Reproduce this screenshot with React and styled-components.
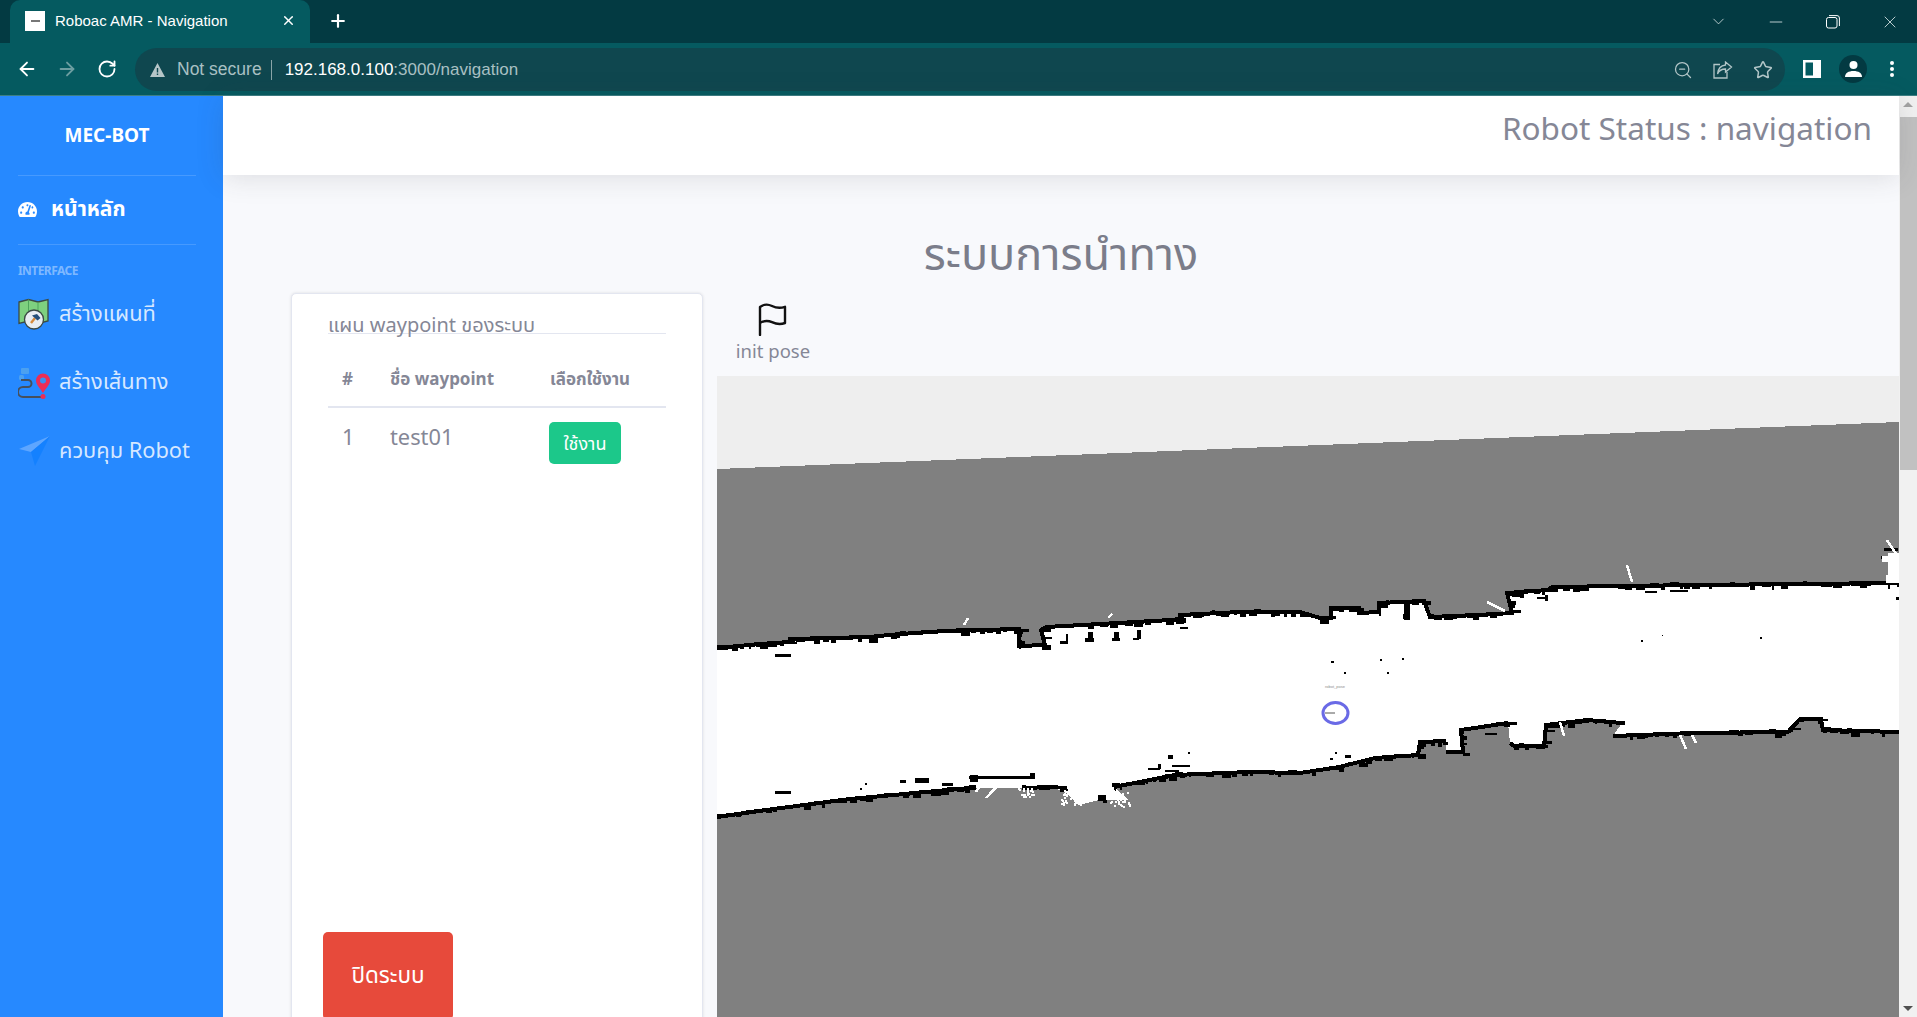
import React from "react";
import styled, { createGlobalStyle } from "styled-components";
import { FaTachometerAlt } from "react-icons/fa";
import { ArrowLeft, ArrowRight, RotateCw, ZoomOut, Star, ChevronDown, Minus, X, Plus } from "lucide-react";

const Global = createGlobalStyle`
  html, body { margin: 0; padding: 0; height: 100%; overflow: hidden; background: #f8f9fc; }
  #root { height: 1017px; }
  * { box-sizing: border-box; }
`;

const FONT = `"Noto Sans", "Noto Sans Thai", "Open Sans", "Liberation Sans", sans-serif`;
const UI = `"Liberation Sans", "Roboto", sans-serif`;

const Frame = styled.div`
  width: 1917px; height: 1017px; display: flex; flex-direction: column; overflow: hidden;
  font-family: ${FONT}; color: #858796;
`;
const TabStrip = styled.div`
  height: 43px; flex: none; background: #033a42; display: flex; align-items: flex-end; padding-left: 10px; color: #fff;
`;
const Tab = styled.div`
  width: 300px; height: 43px; background: #055a60; border-radius: 10px 10px 0 0; display: flex; align-items: center;
  padding: 0 14px 2px 15px; font: 15px ${UI};
`;
const Favicon = styled.div`
  width: 20px; height: 20px; background: #fff; margin-right: 10px; display: flex; align-items: center; justify-content: center;
  &::after { content: ""; width: 9px; height: 2px; background: #777; }
`;
const TabTitle = styled.span` flex: 1; `;
const NewTab = styled.div` margin: 0 0 12px 18px; display: flex; height: 20px; `;
const WindowControls = styled.div`
  margin-left: auto; margin-right: -1px; height: 43px; display: flex; align-items: center; color: #dfe8e9;
`;
const WindowButton = styled.div` width: 57px; display: flex; justify-content: center; `;
const RestoreIcon = () => (
  <svg width="14" height="14" viewBox="0 0 14 14" fill="none" stroke="#fff" strokeWidth="1">
    <rect x="0.5" y="2.5" width="10.5" height="10.5" rx="2" />
    <path d="M3 .6h8a2.4 2.4 0 0 1 2.4 2.4v8" />
  </svg>
);
const Toolbar = styled.div`
  height: 53px; flex: none; background: #055a60; display: flex; align-items: center; padding-left: 16px; color: #fff;
  border-bottom: 1px solid #3c7f84;
`;
const NavBtn = styled.div`
  width: 40px; display: flex; color: ${p => (p.$dim ? "#6d9ea1" : "#fff")};
  padding-left: ${p => p.$nudge || 0}px;
`;
const Omnibox = styled.div`
  margin-left: -1px; width: 1650px; height: 43px; background: #0f474f; border-radius: 22px; display: flex; align-items: center;
  padding: 1px 0 0 15px; font: 17px ${UI}; color: #a9c0c3;
`;
const NotSecure = styled.span` margin-left: 12px; font-size: 17.5px; `;
const Divider = styled.span` width: 1px; height: 20px; background: #8aa5a8; margin: 0 13px 0 9px; `;
const Host = styled.span` color: #fff; `;
const OmniIcons = styled.div` margin-left: auto; display: flex; align-items: center; gap: 20px; padding-right: 12px; color: #b3c6c8; `;
const ToolRight = styled.div` display: flex; align-items: center; margin-left: 18px; gap: 18px; `;
const Avatar = styled.div`
  width: 28px; height: 28px; border-radius: 50%; background: #033a42; display: flex; align-items: center; justify-content: center;
`;
const DotsWrap = styled.div` display: flex; margin-left: 4px; `;
const Body = styled.div` flex: 1; display: flex; min-height: 0; `;

const Sidebar = styled.aside`
  width: 223px; flex: none; background: #2689ff; color: #fff; padding: 0 27px 0 18px; display: flex; flex-direction: column;
`;
const Brand = styled.div`
  height: 79px; display: flex; align-items: center; justify-content: center; font-size: 19px; font-weight: 700; padding-bottom: 2px;
`;
const Rule = styled.div` height: 1px; background: rgba(255,255,255,.15); `;
const HomeLink = styled.div`
  height: 68px; display: flex; align-items: center; font-size: 21px; font-weight: 700; gap: 14px; padding-bottom: 2px;
`;
const SectionLabel = styled.div`
  margin-top: 18px; font-size: 12px; font-weight: 700; letter-spacing: -.55px; color: rgba(255,255,255,.42); line-height: 16px;
`;
const NavList = styled.div` display: flex; flex-direction: column; margin-top: 1px; `;
const NavItem = styled.div`
  height: 68.5px; display: flex; align-items: center; gap: 9px; font-size: 21.8px; color: rgba(255,255,255,.82); white-space: nowrap;
`;

const Main = styled.main` flex: 1; display: flex; flex-direction: column; min-width: 0; `;
const Topbar = styled.header`
  height: 79px; flex: none; background: #fff; box-shadow: 0 .15rem 1.75rem 0 rgba(58,59,69,.15); display: flex; justify-content: flex-end;
  align-items: center; padding: 0 27px 17px 0; font-size: 31.5px; position: relative; z-index: 1;
`;
const Heading = styled.h1`
  margin: 0; height: 118px; flex: none; display: flex; align-items: center; justify-content: center; font-size: 45px; font-weight: 400; color: #7b7d8a; padding-top: 44px;
`;
const Columns = styled.div` flex: 1; display: flex; min-height: 0; padding-left: 68px; `;
const Card = styled.section`
  width: 412px; flex: none; margin-right: 14px; background: #fff; border: 1px solid #e3e6f0; border-radius: 5px; height: 760px; padding: 20px 36px 0;
  box-shadow: 0 0 3px rgba(58,59,69,.15); display: flex; flex-direction: column;
`;
const CardTitle = styled.div`
  height: 20px; font-size: 20px; line-height: 22px; border-bottom: 1px solid #e3e6f0; white-space: nowrap; color: #858796;
`;
const Table = styled.div` display: grid; grid-template-columns: 62px 160px 1fr; `;
const HeadCell = styled.div`
  height: 74px; padding-top: 31px; line-height: 28px; font-size: 17px; font-weight: 700; border-bottom: 2px solid #e3e6f0; padding-left: ${p => p.$pad || 0}px; white-space: nowrap;
`;
const Cell = styled.div`
  height: 60px; padding-top: 12px; line-height: 34px; font-size: 21.8px; padding-left: ${p => p.$pad || 0}px;
`;
const UseButton = styled.div`
  margin-top: 2px; margin-left: -1px; width: 72px; height: 42px; background: #1cc88a; color: #fff; border-radius: 5px; font-size: 18px;
  display: flex; align-items: center; justify-content: center;
`;
const ShutButton = styled.div`
  margin: 464px 0 0 -5px; width: 130px; height: 88px; background: #e74a3b; border-radius: 5px; color: #fff; font-size: 22.5px; flex: none;
  display: flex; align-items: center; justify-content: center;
`;
const MapColumn = styled.div` flex: 1; display: flex; flex-direction: column; min-width: 0; padding-top: 8px; `;
const PoseTool = styled.div`
  width: 112px; height: 75px; flex: none; display: flex; flex-direction: column; align-items: center; font-size: 18.5px; line-height: 30px; padding-top: 1px;
`;
const MapSvg = styled.svg` display: block; flex: none; background: #808080; `;
const RobotLabel = styled.text` font: 4px ${UI}; fill: #8e8e8e; `;
const Scrollbar = styled.div`
  width: 18px; flex: none; background: #f1f1f1; display: flex; flex-direction: column; align-items: center;
`;
const ScrollArrow = styled.div`
  height: 17px; flex: none; width: 100%; display: flex; align-items: center; justify-content: center;
  &::after { content: ""; border-left: 5px solid transparent; border-right: 5px solid transparent;
    ${p => (p.$down ? "border-top: 5px solid #505050;" : "border-bottom: 5px solid #a3a3a3;")} }
`;
const Thumb = styled.div` width: 100%; height: 353px; background: #c1c1c1; margin-top: 4px; margin-left: 2px; `;
const Spacer = styled.div` flex: 1; `;

/* ---------- map data (coordinates = page pixels) ---------- */
const topWall = [[717,648],[760,644],[789,642],[790,639],[869,637],[900,634],[946,631],[1019,629],[1019,646],[1045,645],[1041,630],[1046,627],[1100,624],[1171,620],[1180,619],[1180,615],[1240,612],[1300,612],[1320,618],[1331,618],[1331,608],[1359,608],[1359,613],[1379,612],[1379,603],[1424,601],[1430,617],[1477,615],[1512,613],[1507,593],[1548,590],[1552,587],[1700,585],[1899,583]];
const bottomWall = [[717,817],[766,810],[850,799],[915,793],[970,788],[1022,788],[1053,787],[1066,793],[1079,805],[1099,800],[1129,800],[1114,787],[1175,775],[1250,772],[1300,773],[1339,767],[1375,758],[1418,755],[1420,742],[1446,741],[1446,752],[1463,752],[1461,730],[1508,723],[1510,743],[1514,746],[1544,746],[1546,725],[1587,720],[1622,723],[1613,736],[1693,733],[1788,732],[1800,719],[1821,719],[1823,730],[1899,732]];
const toPts = a => a.map(p => p.join(",")).join(" ");
const freePoly = toPts([...topWall, ...[...bottomWall].reverse()]);
const bottomLines = [
  [[717,817],[766,810],[850,799],[915,793],[970,788]],
  [[1022,788],[1053,787]],
  [[1114,787],[1175,775],[1250,772],[1300,773],[1339,767],[1375,758],[1418,755],[1420,742],[1446,741]],
  [[1446,752],[1463,752],[1461,730],[1508,723]],
  [[1510,743],[1514,746],[1544,746],[1546,725],[1587,720],[1622,723]],
  [[1613,736],[1693,733],[1788,732],[1800,719],[1821,719],[1823,730],[1899,732]],
];

let seed = 7;
const rnd = () => ((seed = (seed * 16807) % 2147483647) / 2147483647);
const jitter = line => {
  const out = [];
  for (let i = 0; i < line.length - 1; i++) {
    const [x1, y1] = line[i]; const [x2, y2] = line[i + 1];
    const len = Math.hypot(x2 - x1, y2 - y1);
    for (let d = 0; d < len; d += 4 + rnd() * 7) {
      const t = d / len;
      out.push([Math.round(x1 + (x2 - x1) * t), Math.round(y1 + (y2 - y1) * t + rnd() * 4 - 3), Math.round(2 + rnd() * 8), Math.round(2 + rnd() * 3)]);
    }
  }
  return out;
};
const blackBits = [topWall, ...bottomLines].flatMap(jitter);
const blobs = [
  [775,654,16,3],[775,791,16,3],[915,778,14,5],[900,780,6,3],[942,783,11,3],[947,787,8,2],[865,783,2,2],[860,788,2,2],
  [969,776,66,3],[970,775,8,7],[1030,773,5,3],[1053,786,14,3],[1060,789,8,3],[1098,795,8,6],[1103,800,4,3],[1112,783,8,4],
  [1066,634,2,9],[1060,641,8,3],[1088,632,5,8],[1085,638,9,4],[1114,632,5,7],[1112,638,8,3],[1137,630,4,9],[1133,638,6,2],
  [1018,640,4,6],[1180,627,8,2],[1404,602,6,18],[1403,614,3,5],
  [1168,755,5,4],[1188,752,2,2],[1148,768,12,2],[1158,764,3,5],[1165,770,14,2],[1172,765,18,2],[1175,772,8,3],[1176,774,6,3],
  [1331,661,3,2],[1380,659,2,2],[1344,672,2,2],[1387,672,2,2],[1402,658,2,2],[1641,640,2,2],[1662,635,1,1],[1760,637,2,2],
  [1884,548,14,3],[1881,556,3,3],[1892,572,5,3],[1896,597,3,3],[1537,597,9,2],[1545,595,3,6],[1670,590,18,2],[1645,591,12,2],
  [1345,755,6,3],[1335,752,2,2],[1330,758,3,2],[1300,771,4,1],[1485,733,12,2]
];
const whiteBits = [[1888,553,12,30],[1882,556,8,6],[1886,575,10,8]];
const whiteLines = [
  [[1887,540],[1898,557]],[[1627,565],[1632,582]],[[1560,722],[1564,736]],[[1680,735],[1686,749]],[[1692,735],[1696,743]],
  [[1487,602],[1505,611]],[[1003,780],[986,798]],[[984,780],[976,792]],[[964,625],[968,618]],[[1108,618],[1112,614]]
];
const scatter = [];
for (let i = 0; i < 80; i++) {
  const left = i % 2 === 0;
  scatter.push([Math.round((left ? 1060 : 1110) + rnd() * 20), Math.round(790 + rnd() * 16)]);
}
for (let i = 0; i < 24; i++) {
  scatter.push([Math.round(1016 + rnd() * 18), Math.round(786 + rnd() * 10)]);
}

const Flag = () => (
  <svg width="32" height="34" viewBox="0 0 32 34" fill="none" stroke="#111" strokeWidth="2.4" strokeLinejoin="round" strokeLinecap="round">
    <path d="M3 33V5c4-3 8-3 12-1s8 2.6 13 .8V21c-5 1.8-9 1-13-.8s-8-1.6-12 .8" />
  </svg>
);
const MapIcon = () => (
  <svg width="32" height="32" viewBox="0 0 32 32">
    <path d="M1 4l9.500-2.500L20 4l10-2.500V23l-10 2.500L10.500 23 1 25.500z" fill="#7ed07f" stroke="#3c4a44" strokeWidth="1.300" />
    <path d="M10.500 1.500V23M20 4v21" stroke="#4ea55c" strokeWidth="1" />
    <circle cx="16" cy="21.500" r="9.500" fill="#e9eef2" stroke="#3c4a44" strokeWidth="1.300" />
    <path d="M13 25l4-5" stroke="#d68b3c" strokeWidth="2.400" />
    <path d="M14 17.500l5-1.500 3.500 4-3 2.500z" fill="#26507a" />
  </svg>
);
const RouteIcon = () => (
  <svg width="32" height="32" viewBox="0 0 32 32" fill="none">
    <rect x="3" y="1" width="8" height="6" rx="1" fill="#4ba0f0" />
    <rect x="1" y="8" width="5" height="5" rx="1.500" fill="#4ba0f0" />
    <path d="M3 13h7a3.500 3.500 0 0 1 0 7H5a4 4 0 0 0 0 10h20" stroke="#46505c" strokeWidth="2" />
    <path d="M25 26c-3-5-7-8-7-12.500a7 7 0 0 1 14 0C32 18 28 21 25 26z" fill="#ec2d55" />
    <circle cx="25" cy="13.500" r="3" fill="#3b8ff0" />
    <circle cx="25" cy="29.500" r="2.500" fill="#ec2d55" />
  </svg>
);
const PlaneIcon = () => (
  <svg width="32" height="32" viewBox="0 0 32 32">
    <path d="M32 1L1 14l12 3z" fill="#5ea6ff" />
    <path d="M32 1L13 17l4 14z" fill="#1481ff" />
  </svg>
);
const AlertIcon = () => (
  <svg width="15" height="14" viewBox="0 0 15 14">
    <path fillRule="evenodd" d="M7.500 0L15 14H0zM6.800 5v4.500h1.400V5zM6.800 10.500V12h1.400v-1.500z" fill="#b5c5c7" />
  </svg>
);
const ShareIcon = () => (
  <svg width="20" height="18" viewBox="0 0 20 18" fill="none" stroke="#b3c6c8" strokeWidth="1.300">
    <path d="M7 3.500H1v13.500h13v-6" />
    <path d="M12.500 1l6 5-6 5V8C8.500 8 6 9.500 4.500 13 5 8 8 4.500 12.500 4z" />
  </svg>
);
const PanelIcon = () => (
  <svg width="18" height="18" viewBox="0 0 18 18">
    <path fillRule="evenodd" d="M0 0h18v18H0zM2.500 2.500v13H10v-13z" fill="#fff" />
  </svg>
);
const PersonIcon = () => (
  <svg width="17" height="16" viewBox="0 0 17 16" fill="#fff">
    <circle cx="8.500" cy="4" r="4" /><path d="M0 16c0-4 3.500-6 8.500-6s8.500 2 8.500 6z" />
  </svg>
);
const Dots = () => (
  <svg width="6" height="18" viewBox="0 0 6 18" fill="#fff"><circle cx="3" cy="3" r="2" /><circle cx="3" cy="9" r="2" /><circle cx="3" cy="15" r="2" /></svg>
);

export default function App() {
  return (
    <Frame>
      <Global />
      <TabStrip>
        <Tab>
          <Favicon />
          <TabTitle>Roboac AMR - Navigation</TabTitle>
          <X size={15} strokeWidth={2.4} />
        </Tab>
        <NewTab><Plus size={20} strokeWidth={2.6} /></NewTab>
        <WindowControls>
          <WindowButton><ChevronDown size={19} strokeWidth={1} /></WindowButton>
          <WindowButton><Minus size={20} strokeWidth={1} /></WindowButton>
          <WindowButton><RestoreIcon /></WindowButton>
          <WindowButton><X size={20} strokeWidth={1} /></WindowButton>
        </WindowControls>
      </TabStrip>
      <Toolbar>
        <NavBtn><ArrowLeft size={22} strokeWidth={2} /></NavBtn>
        <NavBtn $dim><ArrowRight size={22} strokeWidth={2} /></NavBtn>
        <NavBtn $nudge={1}><RotateCw size={20} strokeWidth={2.2} /></NavBtn>
        <Omnibox>
          <AlertIcon />
          <NotSecure>Not secure</NotSecure>
          <Divider />
          <Host>192.168.0.100</Host>:3000/navigation
          <OmniIcons>
            <ZoomOut size={20} strokeWidth={1.5} />
            <ShareIcon />
            <Star size={20} strokeWidth={1.8} />
          </OmniIcons>
        </Omnibox>
        <ToolRight>
          <PanelIcon />
          <Avatar><PersonIcon /></Avatar>
          <DotsWrap><Dots /></DotsWrap>
        </ToolRight>
      </Toolbar>
      <Body>
        <Sidebar>
          <Brand>MEC-BOT</Brand>
          <Rule />
          <HomeLink><FaTachometerAlt size={19} />หน้าหลัก</HomeLink>
          <Rule />
          <SectionLabel>INTERFACE</SectionLabel>
          <NavList>
            <NavItem><MapIcon />สร้างแผนที่</NavItem>
            <NavItem><RouteIcon />สร้างเส้นทาง</NavItem>
            <NavItem><PlaneIcon />ควบคุม Robot</NavItem>
          </NavList>
        </Sidebar>
        <Main>
          <Topbar>Robot Status : navigation</Topbar>
          <Heading>ระบบการนำทาง</Heading>
          <Columns>
            <Card>
              <CardTitle>แผน waypoint ของระบบ</CardTitle>
              <Table>
                <HeadCell $pad={14}>#</HeadCell>
                <HeadCell>ชื่อ waypoint</HeadCell>
                <HeadCell>เลือกใช้งาน</HeadCell>
                <Cell $pad={14}>1</Cell>
                <Cell>test01</Cell>
                <Cell><UseButton>ใช้งาน</UseButton></Cell>
              </Table>
              <ShutButton>ปิดระบบ</ShutButton>
            </Card>
            <MapColumn>
              <PoseTool><Flag />init pose</PoseTool>
              <MapSvg width="1182" height="641" viewBox="717 376 1182 641" shapeRendering="crispEdges">
                <polygon points="717,376 1899,376 1899,422 717,469" fill="#eeeeee" />
                <polygon points={freePoly} fill="#fff" />
                <polyline points={toPts(topWall)} fill="none" stroke="#000" strokeWidth="4" />
                {bottomLines.map((l, i) => (
                  <polyline key={i} points={toPts(l)} fill="none" stroke="#000" strokeWidth="4" />
                ))}
                {blackBits.map(([x, y, w, h], i) => <rect key={i} x={x} y={y} width={w} height={h} fill="#000" />)}
                {blobs.map(([x, y, w, h], i) => <rect key={i} x={x} y={y} width={w} height={h} fill="#000" />)}
                {whiteBits.map(([x, y, w, h], i) => <rect key={i} x={x} y={y} width={w} height={h} fill="#fff" />)}
                {whiteLines.map(([a, b], i) => <line key={i} x1={a[0]} y1={a[1]} x2={b[0]} y2={b[1]} stroke="#fff" strokeWidth="2.5" />)}
                {scatter.map(([x, y], i) => <rect key={i} x={x} y={y} width="2" height="2" fill="#fff" />)}
                <g shapeRendering="auto">
                  <RobotLabel x="1335" y="688" textAnchor="middle">robot_pose</RobotLabel>
                  <ellipse cx="1335.5" cy="713" rx="12.5" ry="10.5" fill="#fff" stroke="#6a6ae6" strokeWidth="3" />
                  <line x1="1325" y1="713" x2="1335" y2="713" stroke="#555" strokeWidth="1" />
                </g>
              </MapSvg>
            </MapColumn>
          </Columns>
        </Main>
        <Scrollbar>
          <ScrollArrow />
          <Thumb />
          <Spacer />
          <ScrollArrow $down />
        </Scrollbar>
      </Body>
    </Frame>
  );
}
